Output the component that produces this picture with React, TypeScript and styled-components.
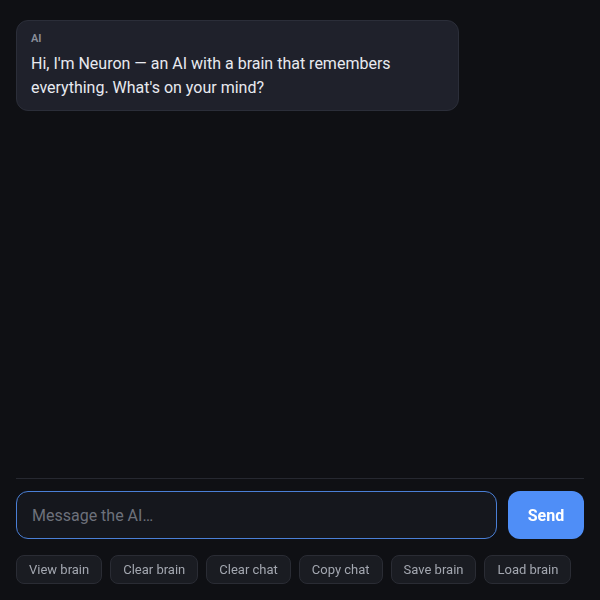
import styled, { createGlobalStyle } from 'styled-components';

const GlobalStyle = createGlobalStyle`
  html, body {
    margin: 0;
    padding: 0;
    background: #0f1014;
  }
  body {
    font-family: Roboto, "Liberation Sans", sans-serif;
    color: #e6e8ee;
  }
  * { box-sizing: border-box; }
`;

const Shell = styled.div`
  height: 600px;
  display: flex;
  flex-direction: column;
  background: #0f1014;
`;

const Messages = styled.div`
  flex: 1;
  padding: 20px 16px;
  display: flex;
  flex-direction: column;
  gap: 12px;
`;

const Bubble = styled.div`
  max-width: 78%;
  align-self: flex-start;
  background: #1f212b;
  border: 1px solid #2b2e39;
  border-radius: 12px;
  padding: 10px 14px;
`;

const Who = styled.div`
  font-size: 11px;
  line-height: 15px;
  font-weight: 600;
  color: #8b8f9a;
  margin-bottom: 6px;
`;

const Text = styled.div`
  font-size: 16px;
  line-height: 24px;
  color: #e8eaf0;
`;

const Footer = styled.div`
  margin: 0 16px;
  border-top: 1px solid #262830;
  padding: 12px 0 16px;
  display: flex;
  flex-direction: column;
  gap: 16px;
`;

const Composer = styled.div`
  display: flex;
  gap: 11px;
`;

const Input = styled.input`
  flex: 1;
  height: 48px;
  border-radius: 12px;
  border: 1px solid #4a7fd6;
  background: #15171d;
  color: #e6e8ee;
  font-family: inherit;
  font-size: 16px;
  padding: 0 15px;
  outline: none;
  caret-color: #cfd3db;

  &::placeholder {
    color: #6d717b;
  }
`;

const Send = styled.button`
  width: 76px;
  height: 48px;
  border: none;
  border-radius: 12px;
  background: #4f8ef7;
  color: #ffffff;
  font-family: inherit;
  font-size: 16px;
  font-weight: 700;
`;

const Tools = styled.div`
  display: flex;
  gap: 8px;
`;

const Chip = styled.button`
  height: 29px;
  padding: 0 12px;
  border-radius: 8px;
  border: 1px solid #2a2c34;
  background: #1a1c22;
  color: #a3a7b0;
  font-family: inherit;
  font-size: 13px;
`;

const tools = ['View brain', 'Clear brain', 'Clear chat', 'Copy chat', 'Save brain', 'Load brain'];

const App = () => {
  return (
    <Shell>
      <GlobalStyle />
      <Messages>
        <Bubble>
          <Who>AI</Who>
          <Text>Hi, I'm Neuron — an AI with a brain that remembers everything. What's on your mind?</Text>
        </Bubble>
      </Messages>
      <Footer>
        <Composer>
          <Input placeholder="Message the AI…" autoFocus />
          <Send>Send</Send>
        </Composer>
        <Tools>
          {tools.map((t) => (
            <Chip key={t}>{t}</Chip>
          ))}
        </Tools>
      </Footer>
    </Shell>
  );
};

export default App;
